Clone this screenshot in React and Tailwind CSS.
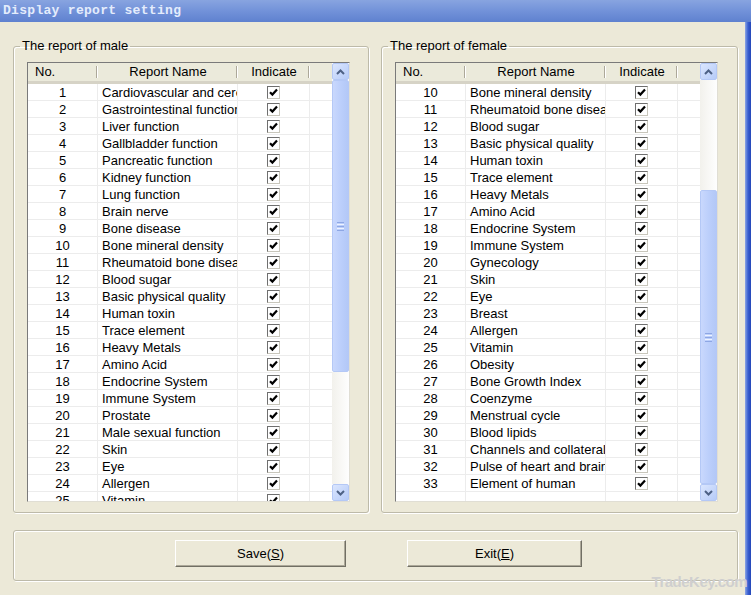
import React from "react";

const maleRows = [
  "Cardiovascular and cerebrovascular",
  "Gastrointestinal function",
  "Liver function",
  "Gallbladder function",
  "Pancreatic function",
  "Kidney function",
  "Lung function",
  "Brain nerve",
  "Bone disease",
  "Bone mineral density",
  "Rheumatoid bone disease",
  "Blood sugar",
  "Basic physical quality",
  "Human toxin",
  "Trace element",
  "Heavy Metals",
  "Amino Acid",
  "Endocrine System",
  "Immune System",
  "Prostate",
  "Male sexual function",
  "Skin",
  "Eye",
  "Allergen",
  "Vitamin",
  "Obesity",
].map((name, i) => ({ no: i + 1, name }));

const femaleRows = [
  "Bone mineral density",
  "Rheumatoid bone disease",
  "Blood sugar",
  "Basic physical quality",
  "Human toxin",
  "Trace element",
  "Heavy Metals",
  "Amino Acid",
  "Endocrine System",
  "Immune System",
  "Gynecology",
  "Skin",
  "Eye",
  "Breast",
  "Allergen",
  "Vitamin",
  "Obesity",
  "Bone Growth Index",
  "Coenzyme",
  "Menstrual cycle",
  "Blood lipids",
  "Channels and collaterals",
  "Pulse of heart and brain",
  "Element of human",
].map((name, i) => ({ no: i + 10, name }));

const Check = () => (
  <span className="inline-flex w-[13px] h-[13px] bg-white border-t border-l border-[#6f6f6f] border-r border-b border-r-[#c8c6bb] border-b-[#c8c6bb] items-center justify-center">
    <svg width="9" height="9" viewBox="0 0 9 9">
      <path d="M1 4.2 L3.4 6.6 L8 1.6" stroke="#000" strokeWidth="2.2" fill="none" />
    </svg>
  </span>
);

const ArrowBtn = ({ up }) => (
  <div className="h-[17px] w-[17px] flex items-center justify-center rounded-[2px] border border-[#b4c8f6] bg-gradient-to-br from-[#dbe6fe] to-[#b6cbf8]">
    <svg width="9" height="6" viewBox="0 0 9 6">
      <path d={up ? "M1 5 L4.5 1.5 L8 5" : "M1 1 L4.5 4.5 L8 1"} stroke="#4d6185" strokeWidth="2" fill="none" />
    </svg>
  </div>
);

const Thumb = ({ h }) => (
  <div className={`${h} w-[17px] rounded-[2px] border border-[#b4c8f6] bg-gradient-to-r from-[#c9d8fd] via-[#bccffb] to-[#b3c8f7] flex flex-col items-center justify-center gap-[1px]`}>
    <div className="w-[7px] h-[1px] bg-[#8ea7e4]" />
    <div className="w-[7px] h-[1px] bg-[#eef3ff]" />
    <div className="w-[7px] h-[1px] bg-[#8ea7e4]" />
    <div className="w-[7px] h-[1px] bg-[#eef3ff]" />
    <div className="w-[7px] h-[1px] bg-[#8ea7e4]" />
  </div>
);

const Track = ({ h }) => <div className={`${h} w-[17px] bg-gradient-to-r from-[#f2f1ec] to-[#fefefe]`} />;

const HeaderCell = ({ w, children, align = "center", last }) => (
  <div className={`${w} h-full relative flex items-center ${align === "left" ? "pl-[7px]" : "justify-center"}`}>
    {children}
    {!last && (
      <div className="absolute right-0 top-[3px] bottom-[3px] w-[2px] flex">
        <div className="w-[1px] bg-[#aca899]" />
        <div className="w-[1px] bg-white" />
      </div>
    )}
  </div>
);

const ReportTable = ({ rows, male }) => (
  <div className="mt-[8px] w-[323px] h-[440px] border border-[#7a7a7a] border-r-[#e0ded4] border-b-[#e0ded4] bg-white flex">
    <div className="w-[304px] flex flex-col overflow-hidden">
      <div className="h-[21px] shrink-0 flex bg-[#ebeadb] border-b-[3px] border-[#d6d3c6]">
        <HeaderCell w="w-[70px]" align="left">No.</HeaderCell>
        <HeaderCell w="w-[140px]">Report Name</HeaderCell>
        <HeaderCell w="w-[72px]">Indicate</HeaderCell>
        <HeaderCell w="w-[22px]" last />
      </div>
      <div className="flex-1 overflow-hidden">
        {rows.map((r) => (
          <div key={r.no} className="h-[17px] flex border-b border-[#ececec]">
            <div className="w-[70px] border-r border-[#ececec] text-center leading-[17px]">{r.no}</div>
            <div className="w-[140px] border-r border-[#ececec] pl-[4px] leading-[17px] whitespace-nowrap overflow-hidden">{r.name}</div>
            <div className="w-[72px] border-r border-[#ececec] flex items-center justify-center">
              <Check />
            </div>
            <div className="w-[22px]" />
          </div>
        ))}
        {!male &&
          [0, 1, 2].map((i) => (
            <div key={i} className="h-[17px] flex border-b border-[#ececec]">
              <div className="w-[70px] border-r border-[#ececec]" />
              <div className="w-[140px] border-r border-[#ececec]" />
              <div className="w-[72px] border-r border-[#ececec]" />
            </div>
          ))}
      </div>
    </div>
    <div className="w-[17px] flex flex-col">
      <ArrowBtn up />
      {male ? (
        <>
          <Thumb h="h-[292px]" />
          <Track h="h-[112px]" />
        </>
      ) : (
        <>
          <Track h="h-[110px]" />
          <Thumb h="h-[294px]" />
        </>
      )}
      <ArrowBtn />
    </div>
  </div>
);

const GroupBox = ({ title, rows, male, extra }) => (
  <fieldset className={`h-[475px] ${extra} border border-[#bdbaa9] rounded-[3px] shadow-[inset_1px_1px_0_#ffffff,1px_1px_0_#ffffff] pl-[13px]`}>
    <legend className="ml-[-7px] px-[2px] leading-[16px]">{title}</legend>
    <ReportTable rows={rows} male={male} />
  </fieldset>
);

const XpButton = ({ w, label, hot }) => (
  <button className={`${w} h-[27px] bg-[#ece9d8] border border-t-white border-l-white border-r-[#716f64] border-b-[#716f64] shadow-[inset_-1px_-1px_0_#aca899] text-[13px]`}>
    {label}(<span className="underline">{hot}</span>)
  </button>
);

export default function App() {
  return (
    <div className="w-[751px] h-[595px] bg-[#ece9d8] flex flex-col overflow-hidden relative text-[13px] text-black" style={{ fontFamily: '"Liberation Sans", Arial, sans-serif' }}>
      <div className="h-[22px] shrink-0 bg-gradient-to-b from-[#88a4e0] via-[#7292d9] to-[#5f81cf] flex items-center pl-[3px]">
        <span className="font-bold text-[13px] text-[#e4ecfc] tracking-[0.3px]" style={{ fontFamily: '"Liberation Mono", "Courier New", monospace' }}>
          Display report setting
        </span>
      </div>
      <div className="flex-1 flex">
        <div className="w-[745px] flex flex-col pl-[13px]">
          <div className="flex mt-[16px] gap-[12px]">
            <GroupBox title="The report of male" rows={maleRows} male extra="w-[356px]" />
            <GroupBox title="The report of female" rows={femaleRows} extra="w-[357px]" />
          </div>
          <div className="mt-[17px] w-[725px] h-[51px] border border-[#bdbaa9] rounded-[3px] shadow-[inset_1px_1px_0_#ffffff,1px_1px_0_#ffffff] flex pl-[161px] pt-[9px] gap-[61px]">
            <XpButton w="w-[171px]" label="Save" hot="S" />
            <XpButton w="w-[175px]" label="Exit" hot="E" />
          </div>
        </div>
        <div className="w-[6px] bg-gradient-to-r from-[#8ea6e4] via-[#3a5fd0] to-[#2447b8]" />
      </div>
      <div className="absolute right-[4px] bottom-[2px] text-[15px] font-bold text-[#cfcfcf] tracking-[-0.5px]">TradeKey.com</div>
    </div>
  );
}
